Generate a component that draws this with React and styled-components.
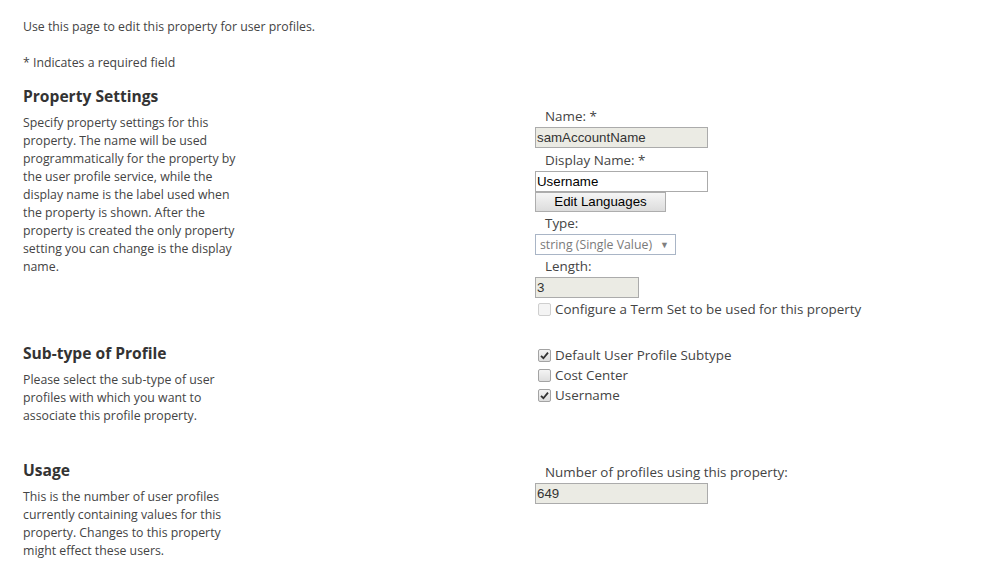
import React from "react";
import styled, { createGlobalStyle } from "styled-components";

const GlobalStyle = createGlobalStyle`
  html, body {
    margin: 0;
    padding: 0;
    background: #fff;
  }
  body {
    font-family: "Open Sans", "Noto Sans", sans-serif;
    color: #444;
  }
`;

const Page = styled.div`
  width: 982px;
  height: 572px;
  padding: 18px 0 0 23px;
  box-sizing: border-box;
  overflow: hidden;
`;

const Intro = styled.p`
  margin: ${(p) => p.$top || 0}px 0 0;
  font-size: 12.3px;
  line-height: 18px;
  color: #444;
`;

const Section = styled.section`
  display: grid;
  grid-template-columns: 512px 1fr;
  margin-top: ${(p) => p.$top}px;
  align-items: start;
`;

const Heading = styled.h3`
  margin: 0;
  font-size: 15.6px;
  line-height: 22px;
  font-weight: 700;
  color: #333;
`;

const Description = styled.p`
  margin: 7px 0 0;
  width: ${(p) => p.$width || 220}px;
  font-size: 12.3px;
  line-height: 18px;
  color: #444;
`;

const Field = styled.div`
  display: flex;
  flex-direction: column;
  align-items: flex-start;
  padding-top: ${(p) => p.$top || 0}px;
`;

const Label = styled.div`
  margin-top: ${(p) => p.$top || 0}px;
  padding-left: 10px;
  font-size: 13.4px;
  line-height: 18px;
  color: #444;
`;

const TextInput = styled.div`
  box-sizing: border-box;
  width: ${(p) => p.$width || 173}px;
  height: 21px;
  margin-top: ${(p) => p.$top ?? 2}px;
  padding: 0 1px;
  border: 1px solid #ababab;
  background: ${(p) => (p.$disabled ? "#ebebe4" : "#fff")};
  font-family: "Liberation Sans", Arial, sans-serif;
  font-size: 13.3px;
  line-height: 19px;
  color: ${(p) => (p.$disabled ? "#333" : "#000")};
  white-space: nowrap;
`;

const Button = styled.div`
  box-sizing: border-box;
  width: 131px;
  height: 20px;
  border: 1px solid #adadad;
  background: linear-gradient(#f5f5f5, #dcdcdc);
  font-family: "Liberation Sans", Arial, sans-serif;
  font-size: 13.3px;
  line-height: 18px;
  text-align: center;
  color: #000;
`;

const Select = styled.div`
  box-sizing: border-box;
  display: flex;
  align-items: center;
  justify-content: space-between;
  width: 141px;
  height: 21px;
  margin-top: 2px;
  padding: 0 6px 0 4px;
  border: 1px solid #a9b5c6;
  background: #fff;
  font-size: 12.3px;
  color: #7a7a7a;
  white-space: nowrap;
`;

const Arrow = styled.span`
  font-size: 9px;
  color: #808080;
`;

const CheckRow = styled.label`
  display: flex;
  align-items: center;
  gap: 4px;
  margin-top: ${(p) => p.$top || 0}px;
  padding-left: 3px;
  font-size: 13.4px;
  line-height: ${(p) => p.$line || 18}px;
  color: #444;
`;

const Box = styled.span`
  box-sizing: border-box;
  display: inline-flex;
  align-items: center;
  justify-content: center;
  width: 13px;
  height: 13px;
  border: 1px solid ${(p) => (p.$disabled ? "#cfcfcf" : "#a3a3a3")};
  border-radius: 2px;
  background: ${(p) => (p.$disabled ? "#f4f4f4" : "linear-gradient(#f4f4f4, #dedede)")};
`;

const Checkbox = ({ checked, disabled }) => (
  <Box $disabled={disabled}>
    {checked && (
      <svg width="9" height="9" viewBox="0 0 9 9">
        <path d="M1 4.8 L3.4 7.2 L8 1.6" fill="none" stroke="#333" strokeWidth="1.8" />
      </svg>
    )}
  </Box>
);

const subtypes = [
  { name: "Default User Profile Subtype", checked: true },
  { name: "Cost Center", checked: false },
  { name: "Username", checked: true },
];

export default function App() {
  return (
    <Page>
      <GlobalStyle />
      <Intro>Use this page to edit this property for user profiles.</Intro>
      <Intro $top={18}>* Indicates a required field</Intro>

      <Section $top={13}>
        <div>
          <Heading>Property Settings</Heading>
          <Description>
            Specify property settings for this property. The name will be used
            programmatically for the property by the user profile service,
            while the display name is the label used when the property is
            shown. After the property is created the only property setting you
            can change is the display name.
          </Description>
        </div>
        <Field $top={22}>
          <Label>Name: *</Label>
          <TextInput $disabled>samAccountName</TextInput>
          <Label $top={3}>Display Name: *</Label>
          <TextInput>Username</TextInput>
          <Button>Edit Languages</Button>
          <Label $top={2}>Type:</Label>
          <Select>
            string (Single Value)
            <Arrow>▼</Arrow>
          </Select>
          <Label $top={2}>Length:</Label>
          <TextInput $disabled $width={104}>3</TextInput>
          <CheckRow $top={2}>
            <Checkbox disabled />
            Configure a Term Set to be used for this property
          </CheckRow>
        </Field>
      </Section>

      <Section $top={24}>
        <div>
          <Heading>Sub-type of Profile</Heading>
          <Description>
            Please select the sub-type of user profiles with which you want to
            associate this profile property.
          </Description>
        </div>
        <Field $top={3}>
          {subtypes.map((s) => (
            <CheckRow key={s.name} $line={20}>
              <Checkbox checked={s.checked} />
              {s.name}
            </CheckRow>
          ))}
        </Field>
      </Section>

      <Section $top={34}>
        <div>
          <Heading>Usage</Heading>
          <Description>
            This is the number of user profiles currently containing values for
            this property. Changes to this property might effect these users.
          </Description>
        </div>
        <Field $top={4}>
          <Label>Number of profiles using this property:</Label>
          <TextInput $disabled $top={2}>649</TextInput>
        </Field>
      </Section>
    </Page>
  );
}
